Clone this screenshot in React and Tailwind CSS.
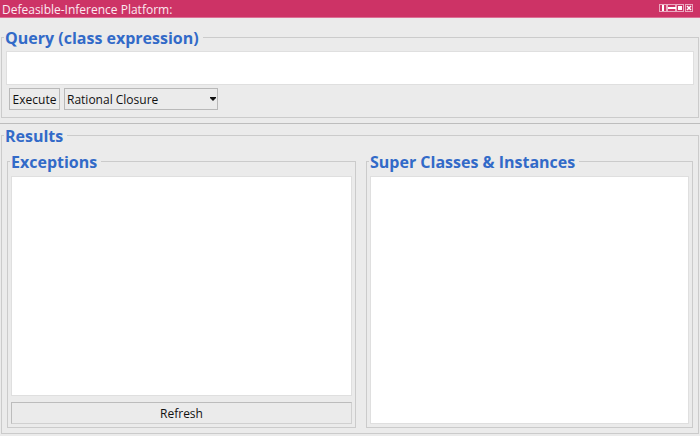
import React from "react";

function Group({ title, className = "", children }) {
  return (
    <fieldset className={`min-w-0 border border-[#cbcbcb] px-0.5 ${className}`}>
      <legend className="h-[22px] whitespace-nowrap pl-px pr-1 text-[16px] font-bold leading-6 text-[#326ac8]">
        {title}
      </legend>
      {children}
    </fieldset>
  );
}

const area =
  "block w-full resize-none border border-[#dfdfdf] bg-white px-1 text-[13px] outline-none";

function TitleBar() {
  return (
    <header className="flex h-[18px] shrink-0 items-center justify-between border-b border-[#dc6f95] bg-[#cd3366] pl-0.5 pr-[7px]">
      <h1 className="pt-0.5 text-[12px] leading-4 text-[#fbe9f0]">Defeasible-Inference Platform:</h1>
      <svg
        width="34"
        height="9"
        viewBox="0 0 34 9"
        fill="none"
        shapeRendering="crispEdges"
        aria-hidden="true"
      >
        <path d="M.5 .5h7v7h-7zM8.500 .5h8v7h-8zM17.500 .5h7v7h-7zM26.500 .5h7v7h-7z" stroke="#eba9c0" />
        <path d="M3 1h2v6H3zM9 3h8v2H9zM19 2h4v4h-4z" fill="#fff" stroke="none" />
        <path d="M28 2l4 4M32 2l-4 4" stroke="#fff" strokeWidth="1.500" shapeRendering="auto" />
      </svg>
    </header>
  );
}

export default function App() {
  return (
    <div className="flex h-screen flex-col bg-[#ebebeb] pb-0.5 font-['Open_Sans','Noto_Sans',sans-serif] text-[13px] text-[#111]">
      <TitleBar />
      <section className="shrink-0 border-b border-[#bdbdbd] px-px pb-[5px] pt-2">
        <Group title="Query (class expression)">
          <div className="px-0.5 pb-[7px] pt-[3px]">
            <textarea aria-label="Query (class expression)" className={`${area} h-[34px]`} />
            <div className="mt-[3px] flex gap-1 pl-[3px]">
              <button className="h-[22px] w-[51px] whitespace-nowrap border border-[#b9b9b9] pt-0.5 text-[12px] leading-4">
                Execute
              </button>
              <div className="relative">
                <select
                  aria-label="Reasoning algorithm"
                  className="h-[22px] w-[154px] appearance-none border border-[#b9b9b9] bg-transparent px-0.5 pt-0.5 text-[12px]"
                >
                  <option>Rational Closure</option>
                </select>
                <svg
                  className="pointer-events-none absolute right-0.5 top-[9px]"
                  width="6"
                  height="4"
                  viewBox="0 0 6 4"
                  aria-hidden="true"
                >
                  <path d="M0 0h6v1L3 4 0 1z" fill="#111" />
                </svg>
              </div>
            </div>
          </div>
        </Group>
      </section>
      <main className="flex min-h-0 flex-1 flex-col px-px">
        <Group title="Results" className="flex flex-1 flex-col">
          <div className="grid min-h-0 flex-1 grid-cols-[349fr_327fr] gap-[10px] pb-[5px] pl-[3px] pr-[3px] pt-1">
            <Group title="Exceptions" className="flex flex-col">
              <div className="flex min-h-0 flex-1 flex-col gap-1.5 px-px pb-[3px] pt-1">
                <textarea aria-label="Exceptions" readOnly className={`${area} min-h-0 flex-1`} />
                <button className="h-[22px] shrink-0 border border-[#d0d0d0] border-l-[#bcbcbc] border-t-[#bcbcbc] pt-0.5 text-[12px] leading-4">
                  Refresh
                </button>
              </div>
            </Group>
            <Group title="Super Classes & Instances" className="flex flex-col">
              <div className="flex min-h-0 flex-1 flex-col px-px pb-[3px] pt-1">
                <textarea
                  aria-label="Super Classes & Instances"
                  readOnly
                  className={`${area} min-h-0 flex-1`}
                />
              </div>
            </Group>
          </div>
        </Group>
      </main>
    </div>
  );
}
